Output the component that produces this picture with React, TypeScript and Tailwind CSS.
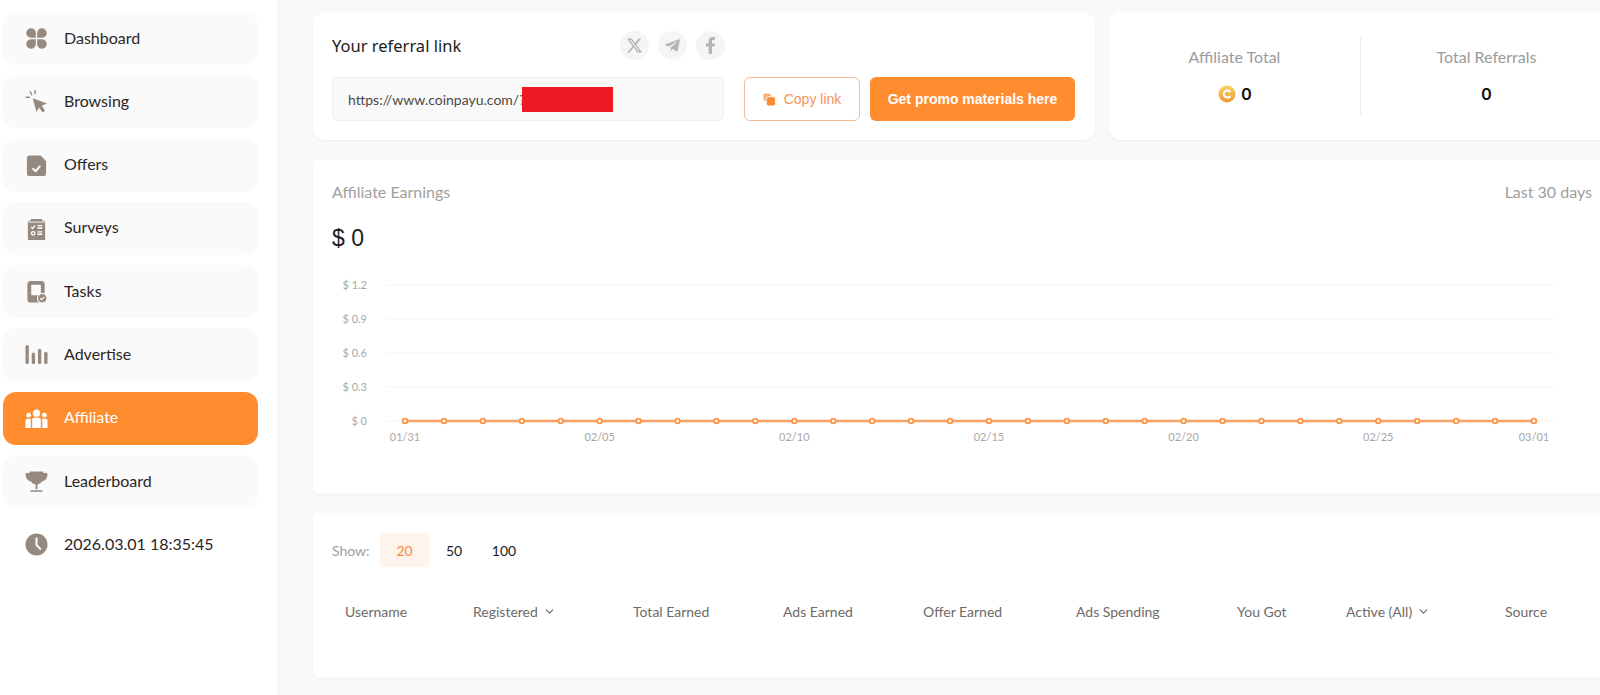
import { FaFacebookF, FaTelegramPlane } from 'react-icons/fa';
import { FaXTwitter } from 'react-icons/fa6';
import { ChevronDown } from 'lucide-react';
import type { ReactNode } from 'react';

const iconClass = 'w-[23px] h-[23px] shrink-0';

const CloverIcon = () => (
  <svg viewBox="0 0 24 24" className={iconClass} fill="currentColor">
    <path d="M11.300 11.300H6A5 5 0 1 1 11.300 6Z" />
    <path d="M12.700 11.300H18A5 5 0 1 0 12.700 6Z" />
    <path d="M11.300 12.700H6A5 5 0 1 0 11.300 18Z" />
    <path d="M12.700 12.700H18A5 5 0 1 1 12.700 18Z" />
  </svg>
);

const PointerIcon = () => (
  <svg viewBox="0 0 24 24" className={iconClass} fill="currentColor">
    <path d="M8 8.500 23 14l-5.500 2.500 3.500 5-2.500 2-3.800-5-2.700 4.500Z" />
    <path d="M1 7.500h3.500M5.500 2l1.500 3M10.500 .5v3.500" stroke="currentColor" strokeWidth="1.500" strokeLinecap="round" fill="none" />
  </svg>
);

const FileCheckIcon = () => (
  <svg viewBox="0 0 24 24" className={iconClass}>
    <path fill="currentColor" d="M5 1.500h10.500c.5 0 1 .2 1.300.5l4.700 4.700c.3.300.5.800.5 1.300V20a3 3 0 0 1-3 3H5a3 3 0 0 1-3-3V4.500a3 3 0 0 1 3-3Z" />
    <path d="M8.500 15.500l2.500 2.500 4.500-5" stroke="#fff" strokeWidth="2" fill="none" strokeLinecap="round" strokeLinejoin="round" />
  </svg>
);

const ClipboardIcon = () => (
  <svg viewBox="0 0 24 24" className={iconClass}>
    <path fill="currentColor" d="M3 4h3V2h12v2h3v20H3Z" />
    <path d="M3 5.300h18" stroke="#fafafa" strokeWidth="1" />
    <path d="M6.500 10.500l1.500 1.500 2.500-3M13 9h5M13 11.500h5M13 15.500h5M13 18h5" stroke="#fff" strokeWidth="1.400" fill="none" />
    <circle cx="8.500" cy="17" r="1.800" stroke="#fff" strokeWidth="1.300" fill="none" />
  </svg>
);

const TabletCheckIcon = () => (
  <svg viewBox="0 0 24 24" className={iconClass}>
    <path fill="currentColor" fillRule="evenodd" d="M6 1h11a3.500 3.500 0 0 1 3.500 3.500V20a3.500 3.500 0 0 1-3.500 3.500H6A3.500 3.500 0 0 1 2.500 20V4.500A3.500 3.500 0 0 1 6 1Zm.5 4V16h10V5Z" />
    <circle cx="18" cy="19" r="5" fill="currentColor" stroke="#fafafa" strokeWidth="1.200" />
    <path d="M15.800 19l1.600 1.600 2.900-3" stroke="#fff" strokeWidth="1.200" fill="none" />
  </svg>
);

const BarsIcon = () => (
  <svg viewBox="0 0 24 24" className={iconClass} fill="currentColor">
    <rect x="0.500" y="2" width="3.500" height="20" rx="1.700" />
    <rect x="7" y="10" width="3.500" height="12" rx="1.700" />
    <rect x="13.500" y="6" width="3.500" height="16" rx="1.700" />
    <rect x="20" y="9" width="3.500" height="13" rx="1.700" />
  </svg>
);

const GroupIcon = () => (
  <svg viewBox="0 0 24 24" className={iconClass} fill="currentColor">
    <circle cx="12" cy="6.500" r="3.800" />
    <circle cx="3.800" cy="8.500" r="2.500" />
    <circle cx="20.200" cy="8.500" r="2.500" />
    <path d="M7.500 13a1.800 1.800 0 0 1 1.800-1.800h5.400a1.800 1.800 0 0 1 1.800 1.800v9h-9Z" />
    <path d="M.500 14a1.800 1.800 0 0 1 1.800-1.800h3.700V22H.500ZM18 12.200h3.700a1.800 1.800 0 0 1 1.800 1.800V22H18Z" />
  </svg>
);

const TrophyIcon = () => (
  <svg viewBox="0 0 24 24" className={iconClass} fill="currentColor">
    <path d="M5 1.500h14l.2 1.500h2.800a1.500 1.500 0 0 1 1.500 1.600c-.1 3.400-1.900 6.400-5.700 7.400-1.100 1.600-2.700 2.700-4.800 3v5h-2V15c-2.100-.3-3.700-1.400-4.800-3C2.400 11 .6 8 .5 4.600A1.500 1.500 0 0 1 2 3h2.800Z" />
    <rect x="5.500" y="21" width="13" height="1.700" rx=".8" />
  </svg>
);

const ClockIcon = () => (
  <svg viewBox="0 0 24 24" className={iconClass}>
    <circle cx="12" cy="12" r="11.500" fill="currentColor" />
    <path d="M12 5.500V12.500l4 4" stroke="#fff" strokeWidth="2" fill="none" strokeLinecap="round" strokeLinejoin="round" />
  </svg>
);

const CopyIcon = () => (
  <svg viewBox="0 0 14 14" className="w-[13px] h-[13px] shrink-0" fill="#fb8c33">
    <rect x="0.500" y="0.500" width="8" height="8" rx="2" opacity="0.700" />
    <rect x="3.500" y="4" width="10" height="10" rx="2.500" stroke="#fff" strokeWidth="1" />
  </svg>
);

const CoinIcon = () => (
  <svg viewBox="0 0 18 18" className="w-[18px] h-[18px] shrink-0">
    <defs>
      <linearGradient id="coin" x1="0" y1="0" x2="0" y2="1">
        <stop offset="0" stopColor="#f9d266" />
        <stop offset="1" stopColor="#f09a32" />
      </linearGradient>
    </defs>
    <circle cx="9" cy="9" r="8.500" fill="url(#coin)" />
    <path d="M12 6.500A3.600 3.600 0 1 0 12 11.500" stroke="#fff" strokeWidth="2" fill="none" strokeLinecap="round" />
  </svg>
);

const navItems: { label: string; icon: ReactNode; active?: boolean }[] = [
  { label: 'Dashboard', icon: <CloverIcon /> },
  { label: 'Browsing', icon: <PointerIcon /> },
  { label: 'Offers', icon: <FileCheckIcon /> },
  { label: 'Surveys', icon: <ClipboardIcon /> },
  { label: 'Tasks', icon: <TabletCheckIcon /> },
  { label: 'Advertise', icon: <BarsIcon /> },
  { label: 'Affiliate', icon: <GroupIcon />, active: true },
  { label: 'Leaderboard', icon: <TrophyIcon /> },
];

const Sidebar = () => (
  <aside className="w-[279px] shrink-0 bg-white border-r border-[#efefef] pl-[3px] pr-[20px] pt-[12px] font-['Lato',sans-serif] text-[16px]">
    <div className="flex flex-col gap-[10.300px]">
      {navItems.map((item) => (
        <div
          key={item.label}
          className={`h-[53px] rounded-[13px] flex items-center pl-[22px] gap-[16px] ${
            item.active ? 'bg-[#ff8d30] text-white' : 'bg-[#fafafa] text-[#2b2624]'
          }`}
        >
          <span className={item.active ? 'text-white' : 'text-[#968a80]'}>{item.icon}</span>
          <span className="pb-[2px]">{item.label}</span>
        </div>
      ))}
      <div className="h-[53px] flex items-center pl-[22px] gap-[16px] text-[#2b2624]">
        <span className="text-[#968a80]">
          <ClockIcon />
        </span>
        <span className="pb-[2px]">2026.03.01 18:35:45</span>
      </div>
    </div>
  </aside>
);

const socials = [<FaXTwitter key="x" />, <FaTelegramPlane key="tg" />, <FaFacebookF key="fb" />];

const ReferralCard = () => (
  <div className="w-[782px] h-[128px] shrink-0 bg-white rounded-[12px] shadow-[0_1px_2px_rgba(0,0,0,0.06)] pl-[19px] pr-[20px] pt-[19px]">
    <div className="flex items-center h-[29px]">
      <span className="w-[288px] pt-[2px] font-['Noto_Sans',sans-serif] text-[16.500px] text-[#1c1c1c]">Your referral link</span>
      <div className="flex gap-[9px]">
        {socials.map((icon, i) => (
          <span key={i} className="w-[29px] h-[29px] rounded-full bg-[#f5f5f5] text-[#b4b4b4] text-[17px] flex items-center justify-center">
            {icon}
          </span>
        ))}
      </div>
    </div>
    <div className="flex mt-[17px]">
      <div className="w-[392px] h-[44px] bg-[#f9f9f9] border border-[#eeeeee] rounded-[6px] flex items-center pl-[15px] font-['Lato',sans-serif] text-[14px] text-[#4d4844]">
        <span>https://www.coinpayu.com/?</span>
        <span className="w-[91px] h-[25px] bg-[#ed1c24] -ml-[3px]" />
      </div>
      <button className="w-[116px] h-[44px] ml-[20px] border border-[#f6b996] rounded-[6px] flex items-center justify-center gap-[8px] font-['Liberation_Sans',sans-serif] text-[14px] text-[#f6935a]">
        <CopyIcon />
        Copy link
      </button>
      <button className="w-[205px] h-[44px] ml-[10px] bg-[#ff8d30] rounded-[6px] font-['Liberation_Sans',sans-serif] font-bold text-[14px] text-white">
        Get promo materials here
      </button>
    </div>
  </div>
);

const StatsCard = () => (
  <div className="w-[503px] h-[128px] shrink-0 bg-white rounded-[12px] shadow-[0_1px_2px_rgba(0,0,0,0.06)] flex items-center font-['Lato',sans-serif]">
    <div className="w-[251px] text-center">
      <div className="text-[16px] text-[#9b9b9b]">Affiliate Total</div>
      <div className="mt-[12px] flex items-center justify-center gap-[6px] text-[17px] font-bold text-[#111]">
        <CoinIcon />0
      </div>
    </div>
    <div className="w-px h-[78px] bg-[#eeeeee]" />
    <div className="w-[251px] text-center">
      <div className="text-[16px] text-[#9b9b9b]">Total Referrals</div>
      <div className="mt-[12px] text-[17px] font-bold text-[#111]">0</div>
    </div>
  </div>
);

const yLabels = ['$ 1.2', '$ 0.9', '$ 0.6', '$ 0.3', '$ 0'];
const xLabels: Record<number, string> = {
  0: '01/31',
  5: '02/05',
  10: '02/10',
  15: '02/15',
  20: '02/20',
  25: '02/25',
  29: '03/01',
};
const points = Array.from({ length: 30 }, (_, i) => i);

const EarningsChart = () => (
  // svg origin sits at the card's top left, chart area measured from the picture
  <svg width="1299" height="190" className="block font-['Lato',sans-serif]">
    {yLabels.map((label, i) => (
      <g key={label}>
        <line x1="73" x2="1241" y1={8 + i * 34} y2={8 + i * 34} stroke="#f3f3f3" />
        <text x="54" y={12 + i * 34} textAnchor="end" fontSize="11" fill="#a8a8a8">
          {label}
        </text>
      </g>
    ))}
    <line x1="92" x2="1221" y1="144" y2="144" stroke="#f9a066" strokeWidth="2.500" />
    {points.map((i) => {
      const x = 92 + i * 38.93;
      return (
        <g key={i}>
          <circle cx={x} cy="144" r="2.300" fill="#fff" stroke="#fa9545" strokeWidth="1.800" />
          {xLabels[i] && (
            <text x={x} y="164" textAnchor="middle" fontSize="11" fill="#a8a8a8">
              {xLabels[i]}
            </text>
          )}
        </g>
      );
    })}
  </svg>
);

const columns = [
  { label: 'Username' },
  { label: 'Registered', chevron: true },
  { label: 'Total Earned' },
  { label: 'Ads Earned' },
  { label: 'Offer Earned' },
  { label: 'Ads Spending' },
  { label: 'You Got' },
  { label: 'Active (All)', chevron: true },
  { label: 'Source' },
];

const App = () => {
  return (
    <div className="flex h-screen overflow-hidden bg-[#faf9f7]">
      <Sidebar />
      <main className="pl-[34px] pt-[12px] w-[1333px] shrink-0">
        <div className="flex gap-[14px]">
          <ReferralCard />
          <StatsCard />
        </div>

        <div className="mt-[20px] h-[334px] bg-white rounded-[6px] shadow-[0_1px_2px_rgba(0,0,0,0.05)] pt-[22px] font-['Lato',sans-serif]">
          <div className="flex justify-between pl-[19px] pr-[20px] text-[16px] text-[#a0a0a0] h-[20px] leading-[20px]">
            <span>Affiliate Earnings</span>
            <span>Last 30 days</span>
          </div>
          <div className="pl-[19px] mt-[17px] h-[38px] leading-[38px] font-['Liberation_Sans',sans-serif] text-[23px] text-[#1d1d1d]">$ 0</div>
          <div className="mt-[20px]">
            <EarningsChart />
          </div>
        </div>

        <div className="mt-[19px] h-[165px] bg-white rounded-[6px] shadow-[0_1px_2px_rgba(0,0,0,0.04)] pt-[20px] font-['Lato',sans-serif] text-[14px]">
          <div className="flex items-center pl-[19px]">
            <span className="w-[48px] text-[#a0a0a0]">Show:</span>
            <span className="w-[49px] h-[34px] flex items-center justify-center rounded-[3px] bg-[#fff4ec] text-[#f58a3c]">20</span>
            <span className="w-[50px] text-center text-[#1d1d1d]">50</span>
            <span className="w-[50px] text-center text-[#1d1d1d]">100</span>
          </div>
          <div className="grid grid-cols-[128px_160px_150px_140px_153px_161px_109px_159px_80px] pl-[32px] mt-[34px] text-[#6f6a66]">
            {columns.map((col) => (
              <div key={col.label} className="flex items-center gap-[5px] whitespace-nowrap">
                {col.label}
                {col.chevron && <ChevronDown size={13} strokeWidth={2} />}
              </div>
            ))}
          </div>
        </div>
      </main>
    </div>
  );
};

export default App;
